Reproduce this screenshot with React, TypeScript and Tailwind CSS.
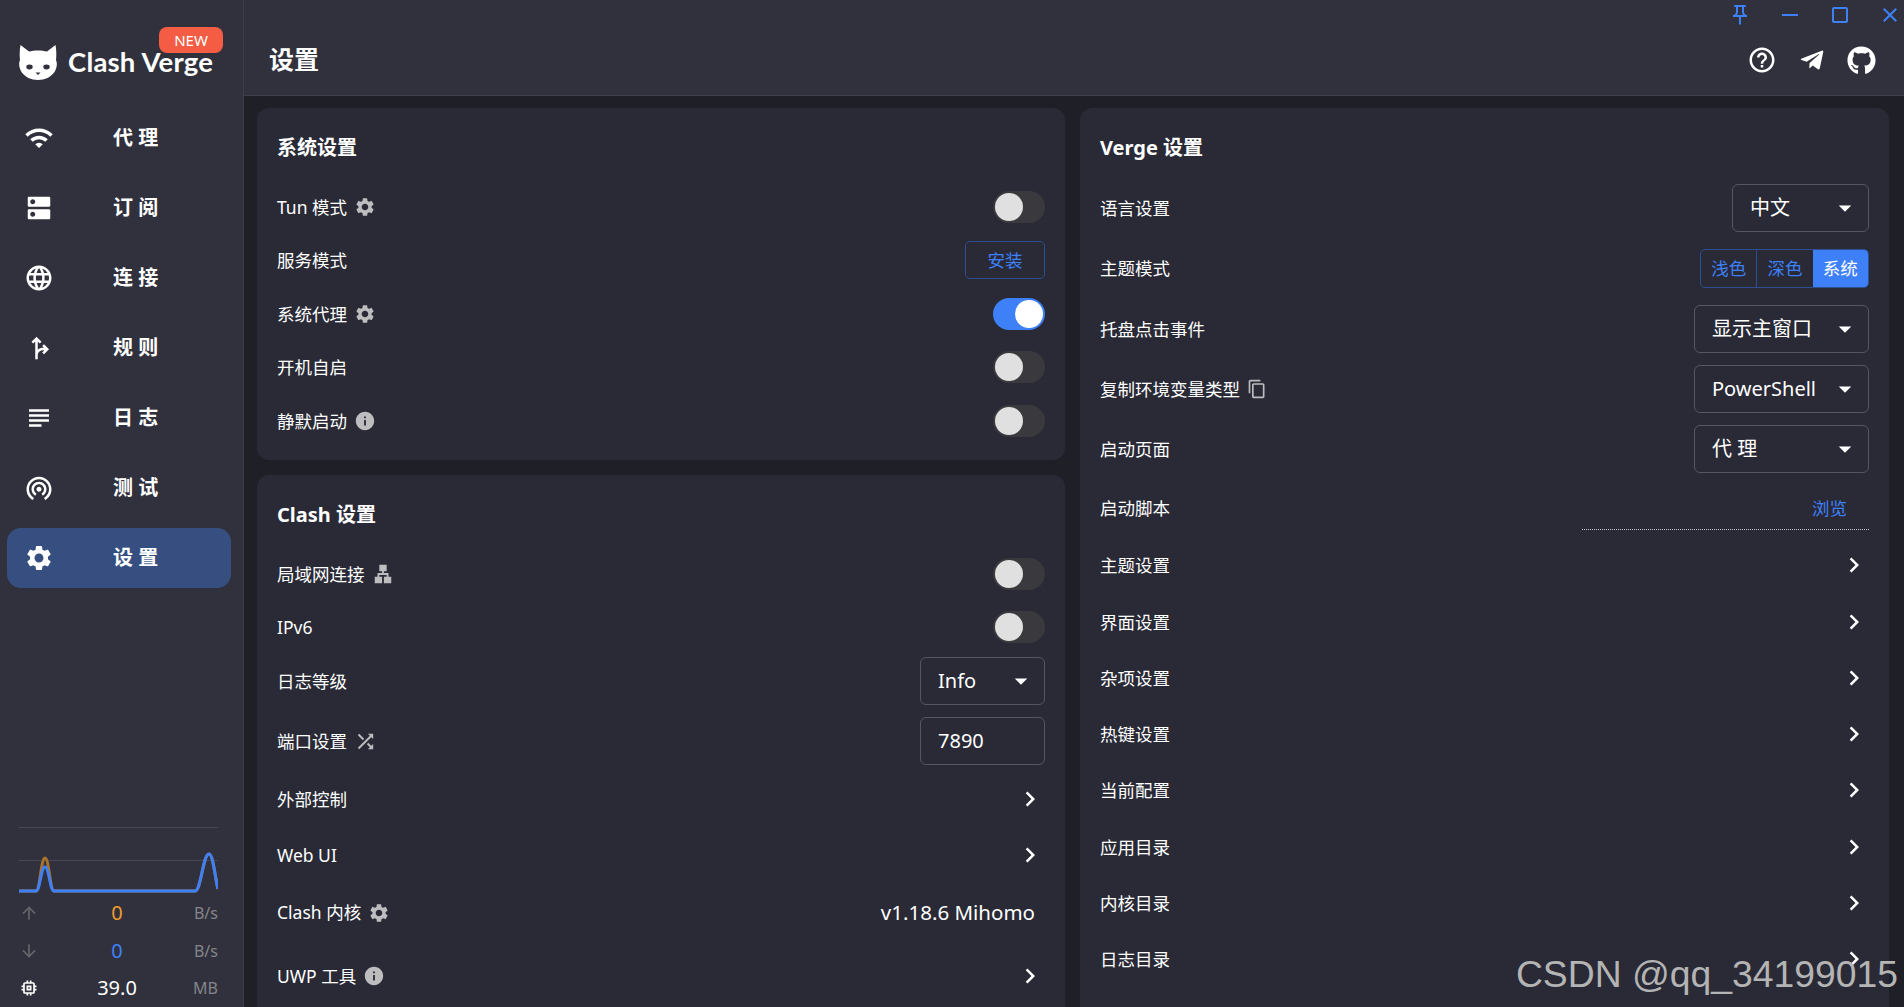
import type { ReactNode } from "react";
import {
  MdArrowDownward,
  MdArrowDropDown,
  MdArrowUpward,
  MdChevronRight,
  MdClose,
  MdContentCopy,
  MdCropSquare,
  MdDns,
  MdForkRight,
  MdHelpOutline,
  MdHorizontalRule,
  MdInfo,
  MdLan,
  MdLanguage,
  MdMemory,
  MdOutlinePushPin,
  MdSettings,
  MdShuffle,
  MdSubject,
  MdWifi,
  MdWifiTethering,
} from "react-icons/md";
import { FaGithub } from "react-icons/fa";

const navItems = [
  { label: "代 理", icon: MdWifi },
  { label: "订 阅", icon: MdDns },
  { label: "连 接", icon: MdLanguage },
  { label: "规 则", icon: MdForkRight },
  { label: "日 志", icon: MdSubject },
  { label: "测 试", icon: MdWifiTethering },
  { label: "设 置", icon: MdSettings, active: true },
];

const vergeLinks = [
  "主题设置",
  "界面设置",
  "杂项设置",
  "热键设置",
  "当前配置",
  "应用目录",
  "内核目录",
  "日志目录",
  "检查更新",
];

function CatLogo() {
  return (
    <svg viewBox="0 0 38 36" className="h-[36px] w-[38px]" fill="#fff">
      <path d="M1.5 1 L10 7.5 C15 6 23 6 28 7.5 L36.5 1 C37.5 6 37.5 12 37 16 C38.5 19 38 24 35.5 28 C32 33 26 36 19 36 C12 36 6 33 2.5 28 C0 24 -0.5 19 1 16 C0.5 12 0.5 6 1.5 1 Z" />
      <ellipse cx="10.5" cy="23" rx="3.2" ry="2.4" fill="#30313d" />
      <ellipse cx="27.5" cy="23" rx="3.2" ry="2.4" fill="#30313d" />
      <path d="M16.5 28.5 h5 l-2.5 2.5 z" fill="#30313d" />
    </svg>
  );
}

function TelegramIcon() {
  return (
    <svg viewBox="0 0 24 24" className="h-[30px] w-[30px]" fill="#fff">
      <path d="M9.78 18.65l.28-4.23 7.68-6.92c.34-.31-.07-.46-.52-.19L7.74 13.3 3.64 12c-.88-.25-.89-.86.2-1.3l15.97-6.16c.73-.33 1.43.18 1.15 1.3l-2.72 12.81c-.19.91-.74 1.13-1.5.71L12.6 16.3l-1.99 1.93c-.23.23-.42.42-.83.42z" />
    </svg>
  );
}

function TrafficChart() {
  return (
    <svg viewBox="0 0 199 70" className="h-[70px] w-[199px]" fill="none">
      <path d="M0 0.5H199M0 33.5H199" stroke="#45464f" strokeWidth="1" />
      <path
        d="M0 64H17C21 64 22 31 26 31C30 31 31 64 35 64H176C182 64 184 27 190 27C194 27 196 50 199 62"
        stroke="#a8742f"
        strokeWidth="3"
      />
      <path
        d="M0 64H17C21 64 22 40 26 40C30 40 31 64 35 64H176C182 64 184 27 190 27C194 27 196 50 199 62"
        stroke="#3e80f8"
        strokeWidth="3"
      />
    </svg>
  );
}

function TrafficRow(
  { icon, value, unit, valueClass }: {
    icon: ReactNode;
    value: string;
    unit: string;
    valueClass: string;
  },
) {
  return (
    <div className="flex h-[37.5px] items-center">
      <div className="flex w-[20px] justify-center">{icon}</div>
      <div className={`flex-1 pl-[17px] text-center text-[20px] ${valueClass}`}>
        {value}
      </div>
      <div className="w-[40px] text-right text-[16px] text-[#85858a]">
        {unit}
      </div>
    </div>
  );
}

function Sidebar() {
  return (
    <aside className="flex h-full w-[244px] shrink-0 flex-col border-r border-[#3d3e49] bg-[#30313d]">
      <div className="relative h-[108px] shrink-0 pl-[19px]">
        <div className="flex items-center gap-[11px] pt-[44px]">
          <CatLogo />
          <span className="font-['Lato'] text-[27.5px] leading-[18px] font-bold tracking-[0.2px] text-white">
            Clash Verge
          </span>
        </div>
        <span className="absolute top-[27px] left-[159px] flex h-[26px] w-[64px] items-center justify-center rounded-[8px] bg-[#f45c43] text-[15px] text-white">
          NEW
        </span>
      </div>
      <nav className="flex flex-col gap-[10px] px-[7px]">
        {navItems.map((item) => {
          const Icon = item.icon;
          return (
            <div
              key={item.label}
              className={`flex h-[60px] w-[224px] items-center rounded-[14px] pl-[17px] ${
                item.active ? "bg-[#364f80]" : ""
              }`}
            >
              <Icon size={30} className="shrink-0 text-white" />
              <span className="ml-[59px] text-[20px] font-bold text-white">
                {item.label}
              </span>
            </div>
          );
        })}
      </nav>
      <div className="mt-auto pr-[25px] pl-[19px]">
        <TrafficChart />
        <div className="-mt-[2px]">
          <TrafficRow
            icon={<MdArrowUpward size={20} className="text-[#63646b]" />}
            value="0"
            unit="B/s"
            valueClass="text-[#f39c2c]"
          />
          <TrafficRow
            icon={<MdArrowDownward size={20} className="text-[#63646b]" />}
            value="0"
            unit="B/s"
            valueClass="text-[#3e80f8]"
          />
          <TrafficRow
            icon={<MdMemory size={20} className="text-white" />}
            value="39.0"
            unit="MB"
            valueClass="text-white"
          />
        </div>
      </div>
    </aside>
  );
}

function Header() {
  return (
    <header className="h-[96px] shrink-0 border-b border-[#3d3e49] bg-[#30313d]">
      <div className="flex h-[30px] items-center justify-end gap-[26px] pr-[2px] text-[#3e80f8]">
        <MdOutlinePushPin size={24} />
        <MdHorizontalRule size={24} />
        <MdCropSquare size={24} />
        <MdClose size={24} />
      </div>
      <div className="flex h-[60px] items-center justify-between pr-[28px] pl-[25px]">
        <h1 className="text-[25px] font-bold text-white">设置</h1>
        <div className="flex items-center gap-[20px] text-white">
          <MdHelpOutline size={30} />
          <TelegramIcon />
          <FaGithub size={29} />
        </div>
      </div>
    </header>
  );
}

function Toggle({ on = false }: { on?: boolean }) {
  return (
    <div
      className={`flex h-[32px] w-[52px] items-center rounded-full px-[2px] ${
        on ? "justify-end bg-[#3e80f8]" : "justify-start bg-[#3a393d]"
      }`}
    >
      <span
        className={`h-[28px] w-[28px] rounded-full ${
          on ? "bg-white" : "bg-[#e0e0e0]"
        }`}
      />
    </div>
  );
}

function Select({ value, width }: { value: string; width: string }) {
  return (
    <div
      className={`flex h-[48px] items-center justify-between rounded-[6px] border border-[#55565e] pr-[8px] pl-[17px] text-[20px] text-white ${width}`}
    >
      <span>{value}</span>
      <MdArrowDropDown size={30} />
    </div>
  );
}

function Row(
  { label, hint, height, children }: {
    label: string;
    hint?: ReactNode;
    height: string;
    children?: ReactNode;
  },
) {
  return (
    <div className={`flex items-center justify-between ${height}`}>
      <div className="flex items-center gap-[7px] text-[17.5px] text-white">
        <span>{label}</span>
        {hint}
      </div>
      {children}
    </div>
  );
}

function Chevron() {
  return <MdChevronRight size={30} className="text-white" />;
}

function SettingsHint() {
  return <MdSettings size={22} className="text-[#bdbdc0]" />;
}

function InfoHint() {
  return <MdInfo size={22} className="text-[#bdbdc0]" />;
}

function Card(
  { title, className, children }: {
    title: string;
    className?: string;
    children: ReactNode;
  },
) {
  return (
    <section
      className={`rounded-t-[12px] rounded-b-[12px] bg-[#292a36] px-[20px] pt-[20px] ${
        className ?? ""
      }`}
    >
      <h2 className="mb-[12px] flex h-[40px] items-center text-[20px] font-bold text-white">
        {title}
      </h2>
      {children}
    </section>
  );
}

function SystemCard() {
  return (
    <Card title="系统设置" className="h-[352px] shrink-0">
      <Row label="Tun 模式" hint={<SettingsHint />} height="h-[53.5px]">
        <Toggle />
      </Row>
      <Row label="服务模式" height="h-[53.5px]">
        <button className="flex h-[38px] w-[80px] items-center justify-center rounded-[5px] border border-[#2d4f90] text-[17.5px] text-[#3e80f8]">
          安装
        </button>
      </Row>
      <Row label="系统代理" hint={<SettingsHint />} height="h-[53.5px]">
        <Toggle on />
      </Row>
      <Row label="开机自启" height="h-[53.5px]">
        <Toggle />
      </Row>
      <Row label="静默启动" hint={<InfoHint />} height="h-[53.5px]">
        <Toggle />
      </Row>
    </Card>
  );
}

function ClashCard() {
  return (
    <Card title="Clash 设置" className="flex-1 rounded-b-none">
      <Row
        label="局域网连接"
        hint={<MdLan size={22} className="text-[#bdbdc0]" />}
        height="h-[53.5px]"
      >
        <Toggle />
      </Row>
      <Row label="IPv6" height="h-[53.5px]">
        <Toggle />
      </Row>
      <Row label="日志等级" height="h-[54px]">
        <Select value="Info" width="w-[125px]" />
      </Row>
      <Row
        label="端口设置"
        hint={<MdShuffle size={23} className="text-[#bdbdc0]" />}
        height="h-[66px]"
      >
        <div className="flex h-[48px] w-[125px] items-center rounded-[6px] border border-[#55565e] pl-[17px] text-[20px] text-white">
          7890
        </div>
      </Row>
      <Row label="外部控制" height="h-[50px]">
        <Chevron />
      </Row>
      <Row label="Web UI" height="h-[62px]">
        <Chevron />
      </Row>
      <Row label="Clash 内核" hint={<SettingsHint />} height="h-[53px]">
        <span className="pr-[10px] text-[20.5px] text-white">v1.18.6 Mihomo</span>
      </Row>
      <Row label="UWP 工具" hint={<InfoHint />} height="h-[74px]">
        <Chevron />
      </Row>
    </Card>
  );
}

function ThemeButtons() {
  return (
    <div className="flex h-[39px] w-[169px] overflow-hidden rounded-[5px] border border-[#2d4f90] text-[17.5px]">
      <span className="flex flex-1 items-center justify-center border-r border-[#2d4f90] text-[#3e80f8]">
        浅色
      </span>
      <span className="flex flex-1 items-center justify-center text-[#3e80f8]">
        深色
      </span>
      <span className="flex flex-1 items-center justify-center bg-[#3e80f8] text-white">
        系统
      </span>
    </div>
  );
}

function VergeCard() {
  return (
    <Card title="Verge 设置" className="h-full rounded-b-none">
      <div className="-mt-[2px]">
        <Row label="语言设置" height="h-[60.25px]">
          <Select value="中文" width="w-[137px]" />
        </Row>
        <Row label="主题模式" height="h-[60.25px]">
          <ThemeButtons />
        </Row>
        <Row label="托盘点击事件" height="h-[60.25px]">
          <Select value="显示主窗口" width="w-[175px]" />
        </Row>
        <Row
          label="复制环境变量类型"
          hint={<MdContentCopy size={20} className="text-[#bdbdc0]" />}
          height="h-[60.25px]"
        >
          <Select value="PowerShell" width="w-[175px]" />
        </Row>
        <Row label="启动页面" height="h-[60.25px]">
          <Select value="代 理" width="w-[175px]" />
        </Row>
        <Row label="启动脚本" height="h-[58px]">
          <div className="flex h-[44px] w-[287px] items-center justify-end border-b border-dotted border-[#c8c8c8] pr-[22px] text-[17.5px] text-[#3e80f8]">
            浏览
          </div>
        </Row>
        {vergeLinks.map((label) => (
          <Row key={label} label={label} height="h-[56.25px]">
            <Chevron />
          </Row>
        ))}
      </div>
    </Card>
  );
}

export default function App() {
  return (
    <div className="relative flex h-[1007px] w-[1904px] overflow-hidden bg-[#1e1f27] font-['Noto_Sans','Noto_Sans_CJK_SC',sans-serif]">
      <Sidebar />
      <main className="flex min-w-0 flex-1 flex-col">
        <Header />
        <div className="flex min-h-0 flex-1 gap-[15px] pt-[12px] pr-[15px] pl-[13px]">
          <div className="flex w-[808px] flex-col gap-[15px]">
            <SystemCard />
            <ClashCard />
          </div>
          <div className="w-[809px] overflow-hidden">
            <VergeCard />
          </div>
        </div>
      </main>
      <div className="absolute top-[953px] right-[6px] font-['Liberation_Sans',sans-serif] text-[37.3px] leading-[42px] text-[#b4b4b4]">
        CSDN @qq_34199015
      </div>
    </div>
  );
}
